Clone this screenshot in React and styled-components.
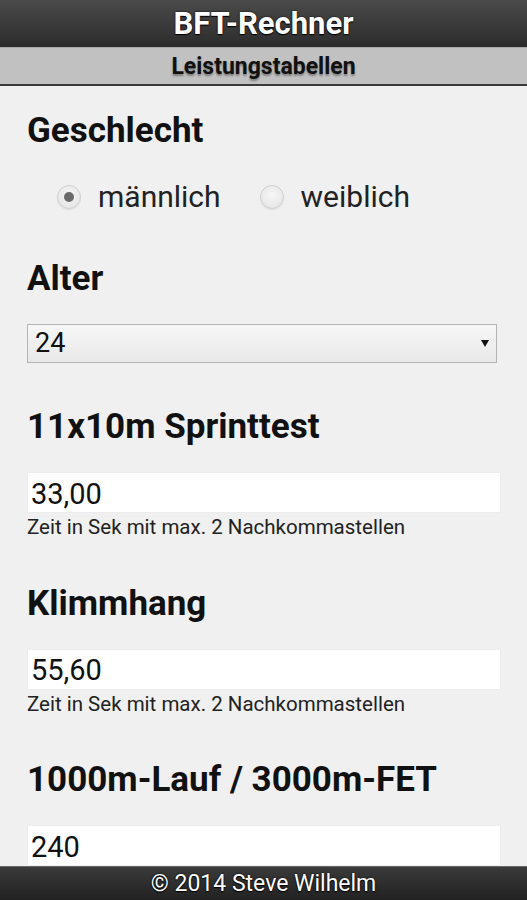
import React from 'react';
import styled, { createGlobalStyle } from 'styled-components';

const GlobalStyle = createGlobalStyle`
  html, body {
    margin: 0;
    padding: 0;
    background: #f0f0f0;
    font-family: Roboto, "Liberation Sans", sans-serif;
    color: #111;
  }
`;

const Page = styled.div`
  min-height: 900px;
  display: flex;
  flex-direction: column;
  background: #f0f0f0;
`;

const Header = styled.header`
  height: 47px;
  display: flex;
  align-items: center;
  justify-content: center;
  background: linear-gradient(#4a4a4a, #2c2c2c);
  h1 {
    margin: 0;
    font-size: 31px;
    font-weight: 700;
    color: #fff;
    text-shadow: 0 0 2px #000, 0 1px 1px #000;
  }
`;

const NavBar = styled.nav`
  height: 36px;
  display: flex;
  align-items: center;
  justify-content: center;
  background: #c1c1c1;
  border-top: 1px solid #a8a8a8;
  border-bottom: 2px solid #3a3a3a;
  a {
    font-size: 23px;
    font-weight: 700;
    color: #111;
    text-decoration: none;
    text-shadow: 0 2px 2px rgba(0, 0, 0, 0.35);
  }
`;

const Content = styled.main`
  flex: 1;
  padding: 0 26px 60px 27px;
`;

const Section = styled.section`
  margin-top: ${(p) => (p.first ? '25px' : '44.5px')};
`;

const Heading = styled.h2`
  margin: 0 0 25px;
  font-size: 35px;
  line-height: 40px;
  font-weight: 700;
  color: #111;
`;

const RadioRow = styled.div`
  display: flex;
  align-items: center;
  padding: 4px 0 0 30px;
`;

const RadioLabel = styled.label`
  display: flex;
  align-items: center;
  font-size: 30px;
  line-height: 34px;
  color: #222;
  margin-right: 39px;
`;

const RadioCircle = styled.span`
  box-sizing: border-box;
  width: 24px;
  height: 24px;
  margin-right: 17px;
  border-radius: 50%;
  border: 1px solid #cfcfcf;
  background: radial-gradient(circle at 50% 40%, #f6f6f6, #e2e2e2);
  box-shadow: 0 1px 1px rgba(0, 0, 0, 0.08);
  display: flex;
  align-items: center;
  justify-content: center;
  &::after {
    content: '';
    width: 10px;
    height: 10px;
    border-radius: 50%;
    background: ${(p) => (p.checked ? '#6a6a6a' : 'transparent')};
  }
`;

const Select = styled.div`
  box-sizing: border-box;
  width: 470px;
  height: 39px;
  display: flex;
  align-items: center;
  justify-content: space-between;
  padding: 0 7px 0 7px;
  border: 1px solid #b4b4b4;
  background: linear-gradient(#f7f7f7, #e8e8e8);
  font-size: 27px;
  color: #111;
`;

const Arrow = styled.span`
  width: 0;
  height: 0;
  border-left: 4px solid transparent;
  border-right: 4px solid transparent;
  border-top: 7px solid #111;
`;

const Input = styled.div`
  box-sizing: border-box;
  width: 474px;
  height: 41px;
  display: flex;
  align-items: center;
  padding: 2px 3px 0;
  background: #fff;
  border: 1px solid #ececec;
  font-size: 29px;
  color: #111;
`;

const Hint = styled.div`
  margin-top: 2px;
  font-size: 20.5px;
  line-height: 24px;
  color: #222;
`;

const Footer = styled.footer`
  position: fixed;
  left: 0;
  right: 0;
  bottom: 0;
  height: 33px;
  display: flex;
  align-items: center;
  justify-content: center;
  border-top: 1px solid #6a6a6a;
  background: linear-gradient(#3a3a3a, #222);
  color: #fff;
  font-size: 23px;
  text-shadow: 0 0 2px #000, 0 1px 1px #000;
`;

const App = () => (
  <Page>
    <GlobalStyle />
    <Header>
      <h1>BFT-Rechner</h1>
    </Header>
    <NavBar>
      <a href="#tabellen">Leistungstabellen</a>
    </NavBar>
    <Content>
      <Section first>
        <Heading>Geschlecht</Heading>
        <RadioRow>
          <RadioLabel>
            <RadioCircle checked />
            männlich
          </RadioLabel>
          <RadioLabel>
            <RadioCircle />
            weiblich
          </RadioLabel>
        </RadioRow>
      </Section>
      <Section>
        <Heading>Alter</Heading>
        <Select>
          <span>24</span>
          <Arrow />
        </Select>
      </Section>
      <Section>
        <Heading>11x10m Sprinttest</Heading>
        <Input>33,00</Input>
        <Hint>Zeit in Sek mit max. 2 Nachkommastellen</Hint>
      </Section>
      <Section>
        <Heading>Klimmhang</Heading>
        <Input>55,60</Input>
        <Hint>Zeit in Sek mit max. 2 Nachkommastellen</Hint>
      </Section>
      <Section>
        <Heading>1000m-Lauf / 3000m-FET</Heading>
        <Input>240</Input>
      </Section>
    </Content>
    <Footer>© 2014 Steve Wilhelm</Footer>
  </Page>
);

export default App;
